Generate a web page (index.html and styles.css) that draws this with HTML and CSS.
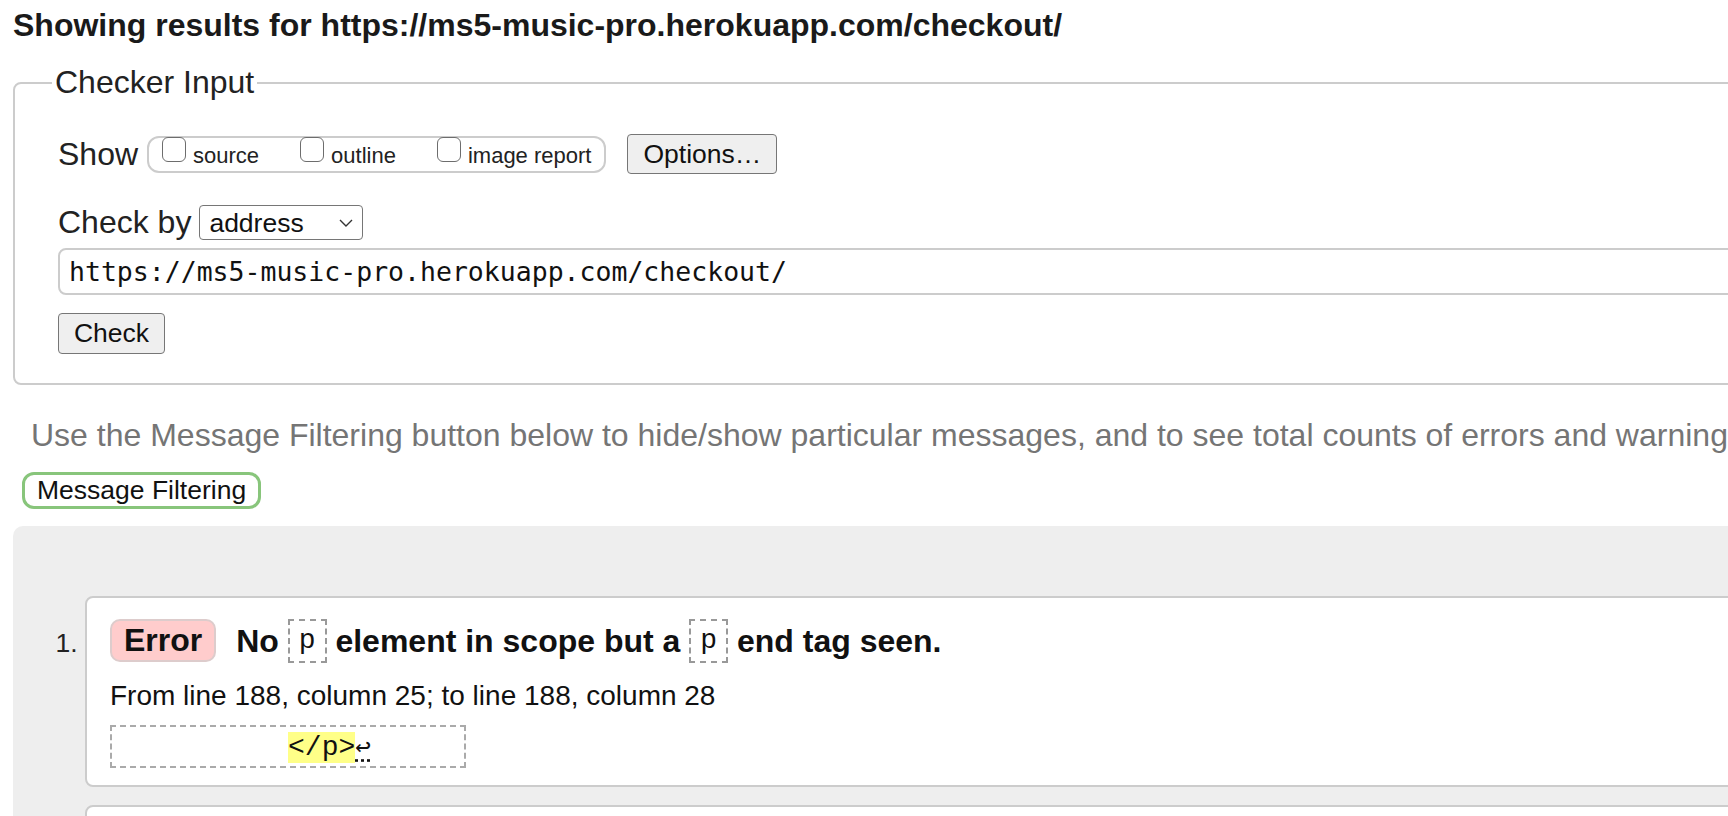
FILE: index.html
```html
<!DOCTYPE html>
<html lang="en">
<head>
<meta charset="utf-8">
<title>Nu Html Checker</title>
<link rel="stylesheet" href="styles.css">
</head>
<body>
<div class="page">
  <h2 class="title">Showing results for https://ms5-music-pro.herokuapp.com/checkout/</h2>
  <fieldset class="checker">
    <legend>Checker Input</legend>
    <div class="row show-row">
      <span class="lbl">Show</span>
      <span class="opts">
        <label class="opt"><input type="checkbox"><span>source</span></label>
        <label class="opt"><input type="checkbox"><span>outline</span></label>
        <label class="opt"><input type="checkbox"><span>image report</span></label>
      </span>
      <button class="btn opt-btn" type="button">Options…</button>
    </div>
    <div class="row by-row">
      <span class="lbl">Check by</span>
      <span class="select">
        <select><option>address</option></select>
        <svg class="chev" width="14" height="8" viewBox="0 0 14 8"><path d="M1 1l6 6 6-6" fill="none" stroke="#333" stroke-width="1.4"/></svg>
      </span>
    </div>
    <input class="url" type="text" value="https://ms5-music-pro.herokuapp.com/checkout/">
    <button class="btn check-btn" type="button">Check</button>
  </fieldset>
  <p class="hint">Use the Message Filtering button below to hide/show particular messages, and to see total counts of errors and warnings.</p>
  <button class="filter" type="button">Message Filtering</button>
  <div class="results">
    <ol class="msgs">
      <li class="msg">
        <p class="head"><span class="badge">Error</span> No <code>p</code> element in scope but a <code>p</code> end tag seen.</p>
        <p class="loc">From line 188, column 25; to line 188, column 28</p>
        <p class="extract"><code>          <b>&lt;/p&gt;</b><span class="lf">↩</span>     </code></p>
      </li>
      <li class="msg msg-next"></li>
    </ol>
  </div>
</div>
</body>
</html>
```
FILE: styles.css
```css
html, body {
  margin: 0;
  overflow: hidden;
  background: #fff;
}
body {
  font-family: "Liberation Sans", Arial, sans-serif;
  color: #222;
}
.page {
  width: 1900px;
  padding: 7px 0 0 13px;
}
.title {
  margin: 0;
  font-size: 32px;
  line-height: 37px;
  font-weight: bold;
  color: #1a1a1a;
}
.checker {
  margin: 20px 0 0 0;
  border: 2px solid #ccc;
  border-radius: 8px;
  padding: 33px 40px 29px 43px;
  min-width: 0;
}
.checker legend {
  font-size: 32px;
  line-height: 37px;
  padding: 0 3px;
  margin-left: -6px;
  color: #222;
}
.row {
  display: flex;
  align-items: center;
}
.show-row { height: 40px; }
.by-row { height: 35px; margin-top: 31px; }
.lbl {
  font-size: 32px;
  line-height: 37px;
  color: #222;
}
.opts {
  display: flex;
  align-items: flex-start;
  margin-left: 9px;
  height: 33px;
  border: 2px solid #ccc;
  border-radius: 12px;
  padding: 0 13px 0 13px;
  gap: 41px;
  box-sizing: content-box;
}
.opt {
  display: flex;
  align-items: flex-start;
  gap: 7px;
  font-size: 22px;
  line-height: 25px;
  color: #222;
}
.opt input {
  appearance: none;
  -webkit-appearance: none;
  margin: -1px 0 0 0;
  width: 24px;
  height: 25px;
  box-sizing: border-box;
  border: 1.5px solid #6d6d6d;
  border-radius: 6px;
  background: #fff;
}
.opt span { padding-top: 5px; }
.btn {
  font-family: "Liberation Sans", Arial, sans-serif;
  font-size: 26.5px;
  color: #111;
  background: #efefef;
  border: 1.5px solid #767676;
  border-radius: 4px;
  padding: 0 15px;
  box-sizing: border-box;
}
.opt-btn {
  margin-left: 21px;
  height: 40px;
}
.select {
  display: flex;
  align-items: center;
  margin-left: 8px;
  width: 164px;
  height: 35px;
  box-sizing: border-box;
  border: 1.5px solid #767676;
  border-radius: 4px;
  background: #fff;
}
.select select {
  appearance: none;
  -webkit-appearance: none;
  border: 0;
  background: transparent;
  font-family: "Liberation Sans", Arial, sans-serif;
  font-size: 26.5px;
  color: #111;
  padding: 0 0 0 9px;
  flex: 1;
  height: 100%;
}
.chev { margin-right: 9px; }
.url {
  display: block;
  margin-top: 8px;
  width: 1760px;
  height: 47px;
  box-sizing: border-box;
  border: 2px solid #ccc;
  border-radius: 8px;
  padding: 0 9px;
  font-family: "DejaVu Sans Mono", monospace;
  font-size: 26.5px;
  color: #111;
  background: #fff;
}
.check-btn {
  display: block;
  margin-top: 18px;
  height: 41px;
  width: 107px;
  padding: 0;
}
.hint {
  margin: 32px 0 0 18px;
  font-size: 32px;
  line-height: 37px;
  color: #757575;
  white-space: nowrap;
}
.filter {
  display: block;
  margin: 18px 0 0 9px;
  height: 37px;
  box-sizing: border-box;
  border: 3px solid #88c57b;
  border-radius: 12px;
  background: #fff;
  padding: 0 12px;
  font-family: "Liberation Sans", Arial, sans-serif;
  font-size: 26.5px;
  color: #111;
}
.results {
  margin-top: 17px;
  background: #eee;
  border-radius: 10px 0 0 0;
  padding: 70px 0 20px 0;
}
.msgs {
  margin: 0;
  padding: 0 0 0 72px;
  font-size: 28px;
}
.msg {
  background: #fff;
  border: 2px solid #ccc;
  border-radius: 8px;
  padding: 21px 20px 17px 23px;
}
.msg::marker {
  font-size: 26.5px;
  color: #222;
}
.msg + .msg { margin-top: 18px; }
.msg-next { height: 60px; }
.head {
  margin: 0;
  font-size: 32px;
  line-height: 44px;
  font-weight: bold;
  color: #111;
  white-space: nowrap;
}
.badge {
  display: inline-block;
  vertical-align: top;
  background: #fcc;
  border: 2px solid #dcc;
  border-radius: 10px;
  padding: 0 12px;
  line-height: 39px;
  margin-right: 11px;
}
.head code {
  display: inline-block;
  vertical-align: top;
  border: 2px dashed #999;
  padding: 0 9px;
  font-family: "Liberation Mono", "Courier New", monospace;
  font-weight: normal;
  font-size: 28px;
  line-height: 40px;
}
.loc {
  margin: 17px 0 0 0;
  font-size: 28px;
  line-height: 32px;
  color: #111;
}
.extract {
  margin: 13px 0 0 0;
  display: inline-block;
  border: 2px dashed #aaa;
  padding: 0 9px 0 8px;
  line-height: 37px;
}
.extract code {
  font-family: "Liberation Mono", "Courier New", monospace;
  font-size: 28px;
  white-space: pre;
  color: #111;
}
.extract b {
  font-weight: normal;
  background: #ff8;
}
.lf {
  font-family: "DejaVu Sans Mono", monospace;
  font-size: 26px;
  text-decoration: underline dotted;
  text-underline-offset: 4px;
}
```
